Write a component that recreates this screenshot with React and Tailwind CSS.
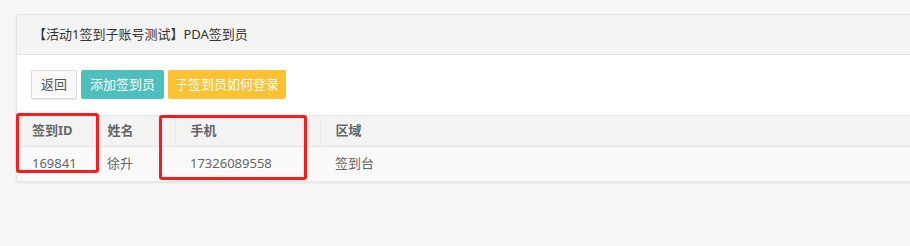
const columns = [
  { label: "签到ID", width: "w-[75px]" },
  { label: "姓名", width: "w-[83px]" },
  { label: "手机", width: "w-[145px]" },
  { label: "区域", width: "" },
];

const rows = [["169841", "徐升", "17326089558", "签到台"]];

export default function App() {
  return (
    <div
      className="relative h-[246px] w-[910px] overflow-hidden bg-[#f6f6f6] pl-4 pt-[14px] text-[13px] text-[#666]"
      style={{ fontFamily: '"Noto Sans", "Noto Sans CJK SC", sans-serif' }}
    >
      <div className="w-[910px] border-l border-t border-[#e6e6e6] bg-white shadow-[0_1px_2px_rgba(0,0,0,0.08)]">
        <div className="flex h-[40px] items-center border-b border-[#e4e4e4] bg-[#f4f4f4] pl-[16px] text-[#333]">
          【活动1签到子账号测试】PDA签到员
        </div>

        <div className="flex gap-[4px] px-[14px] pb-[16px] pt-[15px]">
          <button className="h-[29px] rounded-[2px] border border-[#dcdcdc] bg-[#f9f9f9] px-[9px] text-[#555] shadow-[0_1px_1px_rgba(0,0,0,0.1)]">
            返回
          </button>
          <button className="h-[29px] rounded-[2px] bg-[#4dbfbf] px-[9px] text-white">
            添加签到员
          </button>
          <button className="h-[29px] rounded-[2px] bg-[#fec132] px-[7px] text-white">
            子签到员如何登录
          </button>
        </div>

        <table className="w-full table-fixed border-collapse">
          <thead>
            <tr className="h-[31px] border-t border-b border-[#e4e4e4] bg-[#f3f3f3]">
              {columns.map((c, i) => (
                <th
                  key={c.label}
                  className={`${c.width} ${i < 3 ? "border-r border-[#ebebeb]" : ""} px-[15px] text-left font-bold text-[#666]`}
                >
                  {c.label}
                </th>
              ))}
            </tr>
          </thead>
          <tbody>
            {rows.map((r) => (
              <tr key={r[0]} className="h-[35px] border-b border-[#e6e6e6] bg-[#f9f9f9]">
                {r.map((v, i) => (
                  <td key={i} className="px-[15px] text-left text-[#666]">
                    {v}
                  </td>
                ))}
              </tr>
            ))}
          </tbody>
        </table>
      </div>

      <div className="absolute left-[16px] top-[113px] h-[60px] w-[83px] rounded-[3px] border-[3px] border-[#ff1a1a]" />
      <div className="absolute left-[159px] top-[115px] h-[65px] w-[148px] rounded-[3px] border-[3px] border-[#ff1a1a]" />
    </div>
  );
}
